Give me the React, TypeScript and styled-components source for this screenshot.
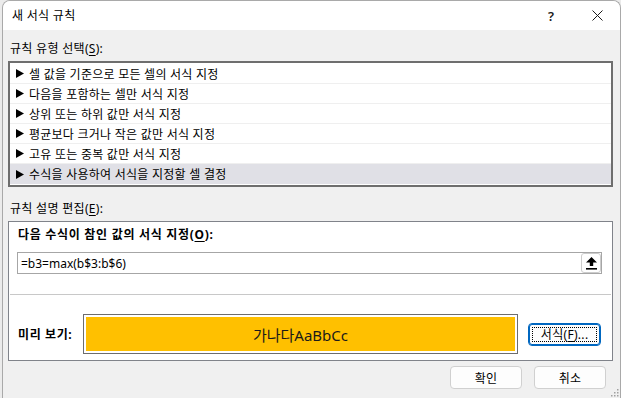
import React from "react";
import styled, { createGlobalStyle } from "styled-components";

const Global = createGlobalStyle`
  html, body { margin: 0; padding: 0; background: #ebebeb; }
  body {
    font-family: "Noto Sans", "Noto Sans CJK KR", sans-serif;
    font-size: 12px;
    color: #000;
  }
  * { box-sizing: border-box; }
`;

const Frame = styled.div`
  width: 621px;
  height: 398px;
  display: flex;
  padding-left: 2px;
  overflow: hidden;
  background: #ebebeb;
`;

const Dialog = styled.div`
  position: relative;
  flex: 1;
  display: flex;
  flex-direction: column;
  background: #f0f0f0;
  border: 1px solid #a9a9a9;
  border-bottom: none;
  border-radius: 8px 8px 0 0;
  overflow: hidden;
`;

const TitleBar = styled.div`
  height: 29px;
  display: flex;
  align-items: center;
  background: #ffffff;
  padding-left: 9px;
`;

const Title = styled.span`
  flex: 1;
  font-size: 12px;
  line-height: 16px;
  letter-spacing: 0.3px;
`;

const CaptionButton = styled.div`
  width: 46px;
  height: 29px;
  display: flex;
  align-items: center;
  justify-content: center;
  font-size: 13px;
  font-weight: 600;
  color: #1a1a1a;
`;

const Body = styled.div`
  flex: 1;
  display: flex;
  flex-direction: column;
  padding: 0 7px 0 5px;
`;

const SectionLabel = styled.div<{ $top: number }>`
  margin-top: ${(p) => p.$top}px;
  height: 18px;
  line-height: 18px;
  padding-left: 2px;
  font-size: 12px;
  letter-spacing: 0.3px;
`;

const Mn = styled.span`
  text-decoration: underline;
  text-underline-offset: 2px;
`;

const RuleList = styled.div`
  margin-top: 3px;
  border: 2px solid #6e6e6e;
  background: #ffffff;
  padding: 1px 0;
  display: flex;
  flex-direction: column;
`;

const RuleRow = styled.div<{ $selected?: boolean; $last?: boolean }>`
  height: 20px;
  display: flex;
  align-items: center;
  gap: 5px;
  padding-left: 6px;
  background: ${(p) => (p.$selected ? "#e0e0e6" : "#ffffff")};
  border-bottom: ${(p) => (p.$last ? "none" : "1px solid #efefef")};
  font-size: 12px;
  letter-spacing: 0.25px;
  white-space: nowrap;
`;

const DescBox = styled.div`
  margin-top: 3px;
  height: 140px;
  border: 1px solid #80838a;
  background: #ffffff;
  display: flex;
  flex-direction: column;
`;

const TopSection = styled.div`
  padding: 4px 10px 20px 8px;
  display: flex;
  flex-direction: column;
  gap: 8px;
`;

const Heading = styled.div`
  height: 18px;
  line-height: 18px;
  font-weight: 700;
  padding-left: 1px;
  font-size: 12px;
  letter-spacing: 0.7px;
`;

const FormulaField = styled.div`
  height: 22px;
  display: flex;
  align-items: center;
  border: 1px solid #a6a6a6;
  background: #ffffff;
  padding-left: 3px;
  font-size: 12px;
`;

const FormulaText = styled.span`
  flex: 1;
`;

const CollapseButton = styled.div`
  width: 20px;
  height: 20px;
  border: 1px solid #cccccc;
  border-radius: 3px;
  background: #ffffff;
  display: flex;
  align-items: center;
  justify-content: center;
`;

const Divider = styled.div`
  height: 1px;
  margin: 0 1px;
  background: #c8c8c8;
`;

const PreviewSection = styled.div`
  display: flex;
  align-items: center;
  padding: 19px 11px 0 9px;
`;

const PreviewLabel = styled.span`
  width: 65px;
  font-weight: 700;
  font-size: 12px;
  letter-spacing: 0.6px;
`;

const PreviewBox = styled.div`
  width: 437px;
  height: 40px;
  border: 1px solid #6d6d6d;
  padding: 2px;
  background: #ffffff;
`;

const PreviewFill = styled.div`
  height: 100%;
  background: #ffc000;
  display: flex;
  align-items: center;
  justify-content: center;
  font-size: 15px;
  color: #1a1a1a;
`;

const PushButton = styled.div<{ $focused?: boolean }>`
  position: relative;
  width: ${(p) => (p.$focused ? 73 : 72)}px;
  height: 23px;
  display: flex;
  align-items: center;
  justify-content: center;
  border-radius: 4px;
  background: #fdfdfd;
  font-size: 12px;
  letter-spacing: 0.3px;
  border: 1px solid ${(p) => (p.$focused ? "#0067c0" : "#d0d0d0")};
  box-shadow: ${(p) => (p.$focused ? "inset 0 0 0 1px #0067c0" : "none")};
  margin-left: ${(p) => (p.$focused ? "10px" : "0")};
  &::after {
    content: "";
    display: ${(p) => (p.$focused ? "block" : "none")};
    position: absolute;
    inset: 3px;
    border: 1px dotted #000;
  }
`;

const Footer = styled.div`
  display: flex;
  justify-content: flex-end;
  gap: 12px;
  padding: 5px 7px 0 0;
`;

const Grip = styled.svg`
  position: absolute;
  right: 1px;
  bottom: 1px;
`;

const Triangle = () => (
  <svg width="8" height="9" viewBox="0 0 8 9">
    <polygon points="0,0 8,4.5 0,9" fill="#000" />
  </svg>
);

const rules = [
  "셀 값을 기준으로 모든 셀의 서식 지정",
  "다음을 포함하는 셀만 서식 지정",
  "상위 또는 하위 값만 서식 지정",
  "평균보다 크거나 작은 값만 서식 지정",
  "고유 또는 중복 값만 서식 지정",
  "수식을 사용하여 서식을 지정할 셀 결정",
];

export default function App() {
  return (
    <>
      <Global />
      <Frame>
        <Dialog>
          <TitleBar>
            <Title>새 서식 규칙</Title>
            <CaptionButton>?</CaptionButton>
            <CaptionButton>
              <svg width="11" height="11" viewBox="0 0 11 11">
                <path d="M0.5 0.5 L10.5 10.5 M10.5 0.5 L0.5 10.5" stroke="#1a1a1a" strokeWidth="1" />
              </svg>
            </CaptionButton>
          </TitleBar>
          <Body>
            <SectionLabel $top={10}>
              규칙 유형 선택(<Mn>S</Mn>):
            </SectionLabel>
            <RuleList>
              {rules.map((r, i) => (
                <RuleRow key={r} $selected={i === rules.length - 1} $last={i === rules.length - 1}>
                  <Triangle />
                  <span>{r}</span>
                </RuleRow>
              ))}
            </RuleList>
            <SectionLabel $top={13}>
              규칙 설명 편집(<Mn>E</Mn>):
            </SectionLabel>
            <DescBox>
              <TopSection>
                <Heading>
                  다음 수식이 참인 값의 서식 지정(<Mn>O</Mn>):
                </Heading>
                <FormulaField>
                  <FormulaText>=b3=max(b$3:b$6)</FormulaText>
                  <CollapseButton>
                    <svg width="11" height="13" viewBox="0 0 11 13">
                      <polygon points="5.5,0 11,5.5 7.2,5.5 7.2,9 3.8,9 3.8,5.5 0,5.5" fill="#000" />
                      <rect x="0" y="11" width="11" height="1.6" fill="#000" />
                    </svg>
                  </CollapseButton>
                </FormulaField>
              </TopSection>
              <Divider />
              <PreviewSection>
                <PreviewLabel>미리 보기:</PreviewLabel>
                <PreviewBox>
                  <PreviewFill>가나다AaBbCc</PreviewFill>
                </PreviewBox>
                <PushButton $focused>
                  서식(<Mn>F</Mn>)...
                </PushButton>
              </PreviewSection>
            </DescBox>
            <Footer>
              <PushButton>확인</PushButton>
              <PushButton>취소</PushButton>
            </Footer>
          </Body>
          <Grip width="9" height="9" viewBox="0 0 9 9">
            {[
              [7, 1],
              [4, 4],
              [7, 4],
              [1, 7],
              [4, 7],
              [7, 7],
            ].map(([x, y]) => (
              <rect key={`${x}-${y}`} x={x} y={y} width="1.5" height="1.5" fill="#a0a0a0" />
            ))}
          </Grip>
        </Dialog>
      </Frame>
    </>
  );
}
